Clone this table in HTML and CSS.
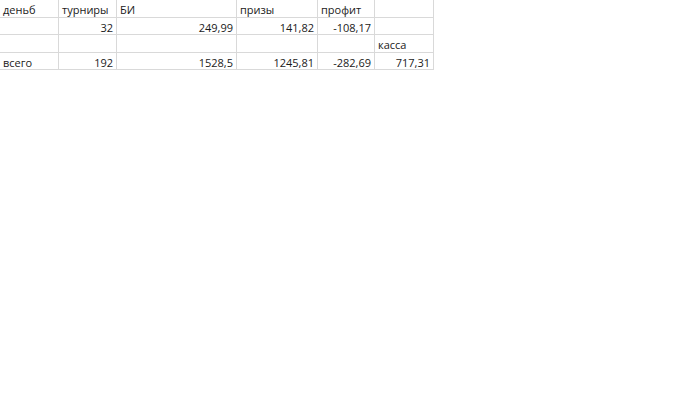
FILE: index.html
```html
<!DOCTYPE html>
<html>
<head>
<meta charset="utf-8">
<link rel="stylesheet" href="styles.css">
</head>
<body>
<div class="sheet">
  <div class="c">деньб</div><div class="c">турниры</div><div class="c">БИ</div><div class="c">призы</div><div class="c">профит</div><div class="c"></div>
  <div class="c"></div><div class="c n">32</div><div class="c n">249,99</div><div class="c n">141,82</div><div class="c n">-108,17</div><div class="c"></div>
  <div class="c"></div><div class="c"></div><div class="c"></div><div class="c"></div><div class="c"></div><div class="c">касса</div>
  <div class="c">всего</div><div class="c n">192</div><div class="c n">1528,5</div><div class="c n">1245,81</div><div class="c n">-282,69</div><div class="c n">717,31</div>
</div>
</body>
</html>
```
FILE: styles.css
```css
html, body {
  margin: 0;
  background: #fff;
}
.sheet {
  display: grid;
  grid-template-columns: 59px 58px 120px 81px 57px 59px;
  grid-auto-rows: 17.5px;
  font-family: "Open Sans", "Liberation Sans", sans-serif;
  font-size: 11px;
  color: #1a1a1a;
  width: max-content;
}
.c {
  box-sizing: border-box;
  border-right: 1px solid #d9d9d9;
  border-bottom: 1px solid #d9d9d9;
  padding: 2px 3px 0;
  line-height: 15px;
  white-space: nowrap;
  overflow: hidden;
}
.n {
  text-align: right;
}
```
